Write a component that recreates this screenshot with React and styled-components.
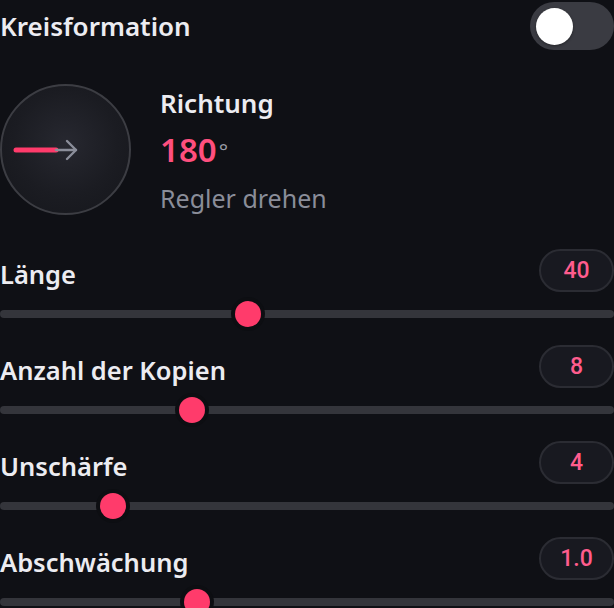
import React from 'react'
import styled, { createGlobalStyle } from 'styled-components'

const GlobalStyle = createGlobalStyle`
  html, body {
    margin: 0;
    padding: 0;
    background: #0f1015;
  }
  body {
    font-family: "Noto Sans", "Open Sans", sans-serif;
    color: #ececf1;
    overflow: hidden;
  }
`

const sliders = [
  { label: 'Länge', value: '40', pct: 0.4 },
  { label: 'Anzahl der Kopien', value: '8', pct: 0.305 },
  { label: 'Unschärfe', value: '4', pct: 0.17 },
  { label: 'Abschwächung', value: '1.0', pct: 0.313 },
]

const THUMB = 26

const Slider = ({ label, value, pct }) => (
  <Row>
    <RowHead>
      <Label>{label}</Label>
      <ValuePill>{value}</ValuePill>
    </RowHead>
    <SliderArea>
      <Track />
      <Thumb style={{ left: `calc((100% - ${THUMB}px) * ${pct})` }} />
    </SliderArea>
  </Row>
)

const App = () => {
  return (
    <>
      <GlobalStyle />
      <Panel>
        <Header>
          <Title>Kreisformation</Title>
          <Toggle>
            <Knob />
          </Toggle>
        </Header>

        <DirectionBlock>
          <Dial>
            <svg width="131" height="131" viewBox="0 0 131 131">
              <line x1="16" y1="66" x2="56" y2="66" stroke="#ff3b6b" strokeWidth="5" strokeLinecap="round" />
              <line x1="56" y1="66" x2="76" y2="66" stroke="#8b8e9a" strokeWidth="2.4" strokeLinecap="round" />
              <polyline points="67,57 76,66 67,75" fill="none" stroke="#8b8e9a" strokeWidth="2.4" strokeLinecap="round" strokeLinejoin="round" />
            </svg>
          </Dial>
          <Info>
            <InfoTitle>Richtung</InfoTitle>
            <Angle>
              180<Degree>°</Degree>
            </Angle>
            <Hint>Regler drehen</Hint>
          </Info>
        </DirectionBlock>

        <SliderList>
          {sliders.map(s => (
            <Slider key={s.label} {...s} />
          ))}
        </SliderList>
      </Panel>
    </>
  )
}

export default App

const Panel = styled.div`
  width: 614px;
  display: flex;
  flex-direction: column;
`

const Header = styled.div`
  height: 52px;
  display: flex;
  align-items: center;
  justify-content: space-between;
`

const Title = styled.div`
  font-size: 26px;
  font-weight: 600;
  color: #ececf1;
`

const Toggle = styled.div`
  width: 84px;
  height: 48px;
  border-radius: 24px;
  background: #3a3b42;
  display: flex;
  align-items: center;
  padding-left: 6px;
  box-sizing: border-box;
`

const Knob = styled.div`
  width: 37px;
  height: 37px;
  border-radius: 50%;
  background: #ffffff;
  box-shadow: 0 1px 3px rgba(0, 0, 0, 0.4);
`

const DirectionBlock = styled.div`
  margin-top: 32px;
  display: flex;
  align-items: center;
  gap: 29px;
`

const Dial = styled.div`
  width: 131px;
  height: 131px;
  border-radius: 50%;
  box-sizing: border-box;
  border: 2px solid #3c3d43;
  background: radial-gradient(circle at 50% 45%, #272830 0%, #1b1c22 55%, #15161b 100%);
  display: flex;
  align-items: center;
  justify-content: center;
  overflow: hidden;
  flex-shrink: 0;

  svg {
    display: block;
    flex-shrink: 0;
  }
`

const Info = styled.div`
  display: flex;
  flex-direction: column;
  margin-top: 2px;
`

const InfoTitle = styled.div`
  font-size: 26px;
  font-weight: 600;
  color: #ececf1;
  line-height: 34px;
`

const Angle = styled.div`
  font-size: 33px;
  font-weight: 600;
  color: #ff4f7e;
  line-height: 50px;
  margin-top: 5px;
`

const Degree = styled.span`
  font-size: 22px;
  font-weight: 400;
  color: #9a9ca8;
  vertical-align: 3px;
  margin-left: 2px;
`

const Hint = styled.div`
  font-size: 25px;
  font-weight: 400;
  color: #8a8d99;
  line-height: 34px;
  margin-top: 6px;
`

const SliderList = styled.div`
  margin-top: 34px;
  display: flex;
  flex-direction: column;
  gap: 18px;
`

const Row = styled.div`
  display: flex;
  flex-direction: column;
  gap: 9px;
`

const RowHead = styled.div`
  height: 43px;
  display: flex;
  align-items: center;
  justify-content: space-between;
`

const Label = styled.div`
  font-size: 25.5px;
  font-weight: 600;
  color: #ececf1;
  padding-top: 6px;
`

const ValuePill = styled.div`
  width: 75px;
  height: 43px;
  box-sizing: border-box;
  border-radius: 22px;
  border: 2px solid #2b2c33;
  background: #181920;
  display: flex;
  align-items: center;
  justify-content: center;
  font-family: Roboto, "Noto Sans", sans-serif;
  font-size: 23px;
  font-weight: 500;
  color: #ff5c8d;
`

const SliderArea = styled.div`
  position: relative;
  height: ${THUMB}px;
  display: flex;
  align-items: center;
`

const Track = styled.div`
  width: 100%;
  height: 8px;
  border-radius: 4px;
  background: #34353b;
`

const Thumb = styled.div`
  position: absolute;
  top: 0;
  width: ${THUMB}px;
  height: ${THUMB}px;
  border-radius: 50%;
  background: #ff3b6b;
  box-shadow: 0 0 0 4px #0d0e12;
`
